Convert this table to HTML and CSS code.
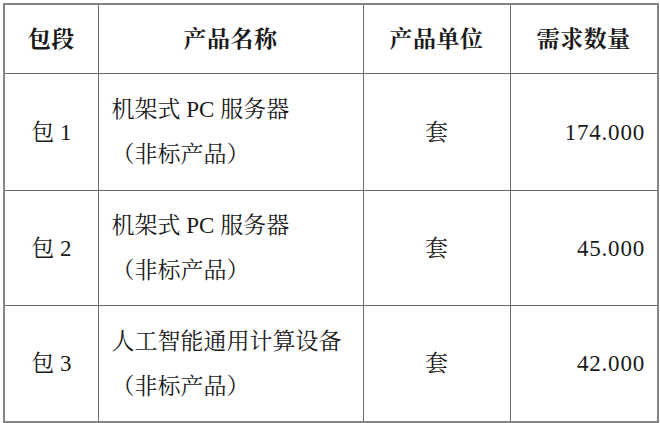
FILE: index.html
```html
<!DOCTYPE html>
<html lang="zh-CN">
<head>
<meta charset="utf-8">
<title>采购需求</title>
<link rel="stylesheet" href="styles.css">
</head>
<body>
<table class="req">
  <colgroup>
    <col class="c1"><col class="c2"><col class="c3"><col class="c4">
  </colgroup>
  <thead>
    <tr class="head">
      <th>包段</th>
      <th>产品名称</th>
      <th>产品单位</th>
      <th>需求数量</th>
    </tr>
  </thead>
  <tbody>
    <tr class="r1">
      <td class="pkg">包 1</td>
      <td class="name">机架式 PC 服务器<br>（非标产品）</td>
      <td class="unit">套</td>
      <td class="qty">174.000</td>
    </tr>
    <tr class="r2">
      <td class="pkg">包 2</td>
      <td class="name">机架式 PC 服务器<br>（非标产品）</td>
      <td class="unit">套</td>
      <td class="qty">45.000</td>
    </tr>
    <tr class="r3">
      <td class="pkg">包 3</td>
      <td class="name">人工智能通用计算设备<br>（非标产品）</td>
      <td class="unit">套</td>
      <td class="qty">42.000</td>
    </tr>
  </tbody>
</table>
</body>
</html>
```
FILE: styles.css
```css
html, body {
  margin: 0;
  padding: 0;
  background: #ffffff;
}
body {
  padding: 3px 0 0 3px;
  font-family: "Liberation Serif", "Noto Serif CJK SC", "Noto Sans CJK SC", serif;
  color: #1a1a1a;
}
.req {
  border-collapse: collapse;
  table-layout: fixed;
  width: 654px;
  border: 2px solid #858585;
  font-size: 23px;
}
.c1 { width: 94px; }
.c2 { width: 265px; }
.c3 { width: 147px; }
.c4 { width: 148px; }
.req th, .req td {
  border: 1px solid #6a6a6a;
  padding: 0 13px;
  vertical-align: middle;
  line-height: 45px;
}
.req th {
  font-weight: 700;
  text-align: center;
  height: 68px;
  letter-spacing: 0.5px;
}
.r1 td { height: 116px; }
.r2 td { height: 114px; }
.r3 td { height: 115px; }
.pkg { text-align: center; }
.name { text-align: left; }
.unit { text-align: center; }
.qty {
  text-align: right;
  letter-spacing: 0.8px;
  padding-right: 12px !important;
}
```
